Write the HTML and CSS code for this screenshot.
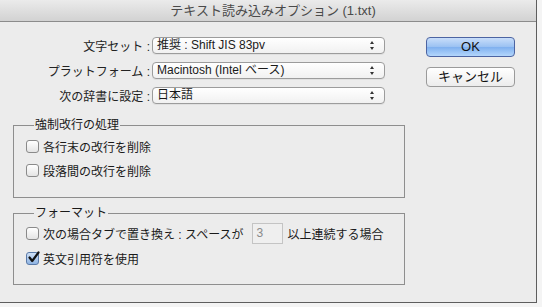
FILE: index.html
```html
<!DOCTYPE html>
<html>
<head>
    <title>テキスト読み込みオプション</title>
    <link rel="stylesheet" href="styles.css">
</head>
<body>
    <div class="window">
        <div class="titlebar">テキスト読み込みオプション (1.txt)</div>

        <div class="content">
            <div class="main">
                <div class="form-rows">
                    <div class="row">
                        <span class="label">文字セット :</span>
                        <div class="select">推奨 : Shift JIS 83pv<span class="arrows"></span></div>
                    </div>
                    <div class="row">
                        <span class="label">プラットフォーム :</span>
                        <div class="select">Macintosh (Intel ベース)<span class="arrows"></span></div>
                    </div>
                    <div class="row">
                        <span class="label">次の辞書に設定 :</span>
                        <div class="select">日本語<span class="arrows"></span></div>
                    </div>
                </div>

                <fieldset class="group group-breaks">
                    <legend>強制改行の処理</legend>
                    <label class="check"><span class="box"></span>各行末の改行を削除</label>
                    <label class="check"><span class="box"></span>段落間の改行を削除</label>
                </fieldset>

                <fieldset class="group group-format">
                    <legend>フォーマット</legend>
                    <label class="check">
                        <span class="box"></span>次の場合タブで置き換え : スペースが
                        <span class="num-field">3</span>
                        以上連続する場合
                    </label>
                    <label class="check">
                        <span class="box checked">
                            <svg width="13" height="13" viewBox="0 0 13 13">
                                <path d="M2.5 6.5 L5.2 10 L11.5 1.5" fill="none" stroke="#111" stroke-width="2.2" stroke-linecap="round" stroke-linejoin="round"/>
                            </svg>
                        </span>英文引用符を使用
                    </label>
                </fieldset>
            </div>

            <div class="buttons">
                <div class="btn btn-default">OK</div>
                <div class="btn">キャンセル</div>
            </div>
        </div>
    </div>
</body>
</html>
```

FILE: styles.css
```css
body {
    margin: 0;
    padding: 0;
    background-color: #f4f4f4;
    font-family: "Liberation Sans", "Noto Sans CJK JP", sans-serif;
    font-size: 12px;
    color: #1a1a1a;
}
.window {
    width: 537px;
    height: 303px;
    background-color: #ececec;
    border-right: 1px solid #5e5e5e;
    border-bottom: 1px solid #5e5e5e;
    box-sizing: border-box;
    overflow: hidden;
}
.titlebar {
    height: 21px;
    line-height: 21px;
    text-align: center;
    font-size: 13px;
    color: #4a4a4a;
    background: linear-gradient(#ebebeb, #d2d2d2);
    border-bottom: 1px solid #8c8c8c;
    padding-left: 10px;
}
.content {
    display: flex;
    padding-top: 15px;
}
.main {
    width: 392px;
    margin-left: 13px;
}
.form-rows {
    display: flex;
    flex-direction: column;
    gap: 8px;
}
.row {
    display: flex;
    align-items: center;
    height: 17px;
}
.label {
    width: 137px;
    text-align: right;
    padding-right: 2px;
    color: #222;
}
.select {
    position: relative;
    width: 233px;
    height: 17px;
    box-sizing: border-box;
    border: 1px solid #9c9c9c;
    border-radius: 4px;
    background: linear-gradient(#ffffff, #f1f1f1);
    padding-left: 4px;
    line-height: 15px;
    box-shadow: 0 1px 0 rgba(0,0,0,0.05);
}
.arrows {
    position: absolute;
    right: 9px;
    top: 3px;
    width: 5px;
    height: 9px;
}
.arrows::before,
.arrows::after {
    content: "";
    position: absolute;
    left: 0;
    border-left: 2.5px solid transparent;
    border-right: 2.5px solid transparent;
}
.arrows::before {
    top: 0;
    border-bottom: 3px solid #333;
}
.arrows::after {
    bottom: 0;
    border-top: 3px solid #333;
}
.group {
    margin: 0;
    padding: 0 0 0 12px;
    border: 1px solid #8e8e8e;
    box-sizing: border-box;
    width: 392px;
}
.group legend {
    margin-left: 8px;
    padding: 0 1px;
    line-height: 16px;
    color: #1a1a1a;
}
.group-breaks {
    margin-top: 13px;
    height: 81px;
    padding-top: 1px;
}
.group-format {
    margin-top: 7px;
    height: 80px;
    padding-top: 0;
}
.check {
    display: flex;
    align-items: center;
    height: 24px;
    color: #1a1a1a;
}
.group-format .check {
    height: 25px;
}
.box {
    width: 13px;
    height: 13px;
    box-sizing: border-box;
    border: 1px solid #8a8a8a;
    border-radius: 3px;
    background: linear-gradient(#ffffff, #e4e4e4);
    margin-right: 4px;
    flex-shrink: 0;
}
.box.checked {
    background: linear-gradient(#cfe0f5, #8fb4e3);
    border-color: #5a7aa8;
    position: relative;
}
.box.checked svg {
    position: absolute;
    left: 0;
    top: -2px;
}
.num-field {
    width: 31px;
    height: 21px;
    box-sizing: border-box;
    border: 1px solid #c4c4c4;
    background-color: #efefef;
    color: #8a8a8a;
    line-height: 19px;
    padding-left: 4px;
    margin: 0 5px 0 8px;
}
.buttons {
    margin-left: 21px;
    display: flex;
    flex-direction: column;
    gap: 10px;
}
.btn {
    width: 89px;
    height: 20px;
    box-sizing: border-box;
    border: 1px solid #9a9a9a;
    border-radius: 4px;
    background: linear-gradient(#ffffff, #ececec);
    text-align: center;
    line-height: 18px;
    font-size: 13px;
    color: #111;
}
.btn-default {
    border-color: #4c64a2;
    background: linear-gradient(#c9defa 0%, #9ac1f2 50%, #7fb0ef 51%, #b3d6fb 100%);
}
```
